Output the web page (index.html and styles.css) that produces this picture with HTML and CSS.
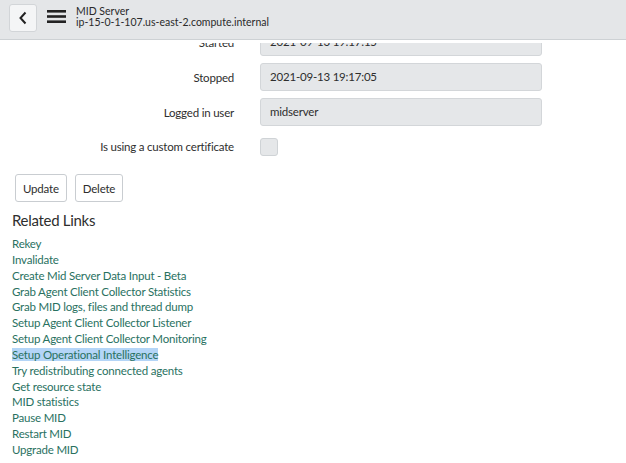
FILE: index.html
```html
<!DOCTYPE html>
<html>
<head>
<meta charset="utf-8">
<link rel="stylesheet" href="styles.css">
</head>
<body>
<header class="topbar">
  <button class="back" aria-label="Back">
    <svg width="10" height="14" viewBox="0 0 10 14"><path d="M7.5 1.5 L2.5 7 L7.5 12.5" fill="none" stroke="#222" stroke-width="2"/></svg>
  </button>
  <span class="menu" aria-label="Menu">
    <svg width="19" height="13" viewBox="0 0 19 13"><rect x="0" y="0" width="19" height="2.6" fill="#222"/><rect x="0" y="5.2" width="19" height="2.6" fill="#222"/><rect x="0" y="10.4" width="19" height="2.6" fill="#222"/></svg>
  </span>
  <div class="title">
    <div class="t1">MID Server</div>
    <div class="t2">ip-15-0-1-107.us-east-2.compute.internal</div>
  </div>
</header>
<div class="viewport">
<main class="content">
  <div class="form">
    <label class="lbl">Started</label>
    <div class="field">2021-09-13 19:17:15</div>
    <label class="lbl">Stopped</label>
    <div class="field">2021-09-13 19:17:05</div>
    <label class="lbl">Logged in user</label>
    <div class="field">midserver</div>
    <label class="lbl row-check">Is using a custom certificate</label>
    <div class="row-check"><span class="check"></span></div>
  </div>
  <div class="actions">
    <button class="btn">Update</button>
    <button class="btn">Delete</button>
  </div>
  <h2 class="related">Related Links</h2>
  <ul class="links">
    <li><a>Rekey</a></li>
    <li><a>Invalidate</a></li>
    <li><a>Create Mid Server Data Input - Beta</a></li>
    <li><a>Grab Agent Client Collector Statistics</a></li>
    <li><a>Grab MID logs, files and thread dump</a></li>
    <li><a>Setup Agent Client Collector Listener</a></li>
    <li><a>Setup Agent Client Collector Monitoring</a></li>
    <li><a class="sel">Setup Operational Intelligence</a></li>
    <li><a>Try redistributing connected agents</a></li>
    <li><a>Get resource state</a></li>
    <li><a>MID statistics</a></li>
    <li><a>Pause MID</a></li>
    <li><a>Restart MID</a></li>
    <li><a>Upgrade MID</a></li>
  </ul>
</main>
</div>
</body>
</html>
```
FILE: styles.css
```css
html, body {
  margin: 0;
  padding: 0;
  background: #fff;
  font-family: Lato, "Liberation Sans", sans-serif;
  color: #2e2e2e;
  overflow: hidden;
}
.topbar {
  height: 40px;
  background: #e4e6e8;
  border-bottom: 1px solid #cdd1d4;
  display: flex;
  align-items: center;
  box-sizing: border-box;
  padding-left: 9px;
}
.back {
  width: 28px;
  height: 28px;
  margin-top: -4px;
  background: #f4f5f6;
  border: 1px solid #d2d5d8;
  border-radius: 3px;
  padding: 0;
  display: flex;
  align-items: center;
  justify-content: center;
}
.menu {
  margin-left: 10px;
  margin-top: -6px;
  display: flex;
}
.title {
  margin-left: 10px;
  margin-top: -5px;
  font-size: 10.5px;
  line-height: 11px;
  color: #2a2a2a;
}
.viewport {
  height: 420px;
  margin-top: 3px;
  overflow: hidden;
}
.content {
  margin-top: -15px;
  font-size: 11.5px;
  letter-spacing: -0.2px;
}
.form {
  display: grid;
  grid-template-columns: 234px 282px;
  column-gap: 26px;
  row-gap: 7px;
  align-items: center;
}
.lbl {
  text-align: right;
  color: #2e2e2e;
}
.field {
  height: 28px;
  box-sizing: border-box;
  background: #e5e7e9;
  border: 1px solid #d3d6d9;
  border-radius: 3px;
  line-height: 26px;
  padding-left: 9px;
  color: #2e2e2e;
}
.row-check {
  margin-top: 5px;
  line-height: 18px;
}
.check {
  display: block;
  width: 18px;
  height: 18px;
  box-sizing: border-box;
  background: #e5e7e9;
  border: 1px solid #cfd3d6;
  border-radius: 3px;
}
.actions {
  display: flex;
  gap: 8px;
  margin: 18px 0 0 15px;
}
.btn {
  height: 28px;
  padding: 0 7px;
  background: #fff;
  border: 1px solid #c9cdd1;
  border-radius: 3px;
  font-family: inherit;
  font-size: 11.5px;
  letter-spacing: -0.2px;
  color: #2e2e2e;
}
.related {
  margin: 8px 0 0 12px;
  font-size: 15px;
  letter-spacing: -0.3px;
  font-weight: normal;
  line-height: 20px;
  color: #2e2e2e;
}
.links {
  list-style: none;
  margin: 6px 0 0 12px;
  padding: 0;
  line-height: 15.85px;
}
.links a {
  color: #29715f;
}
.links a.sel {
  background: #b4d5f7;
}
```
